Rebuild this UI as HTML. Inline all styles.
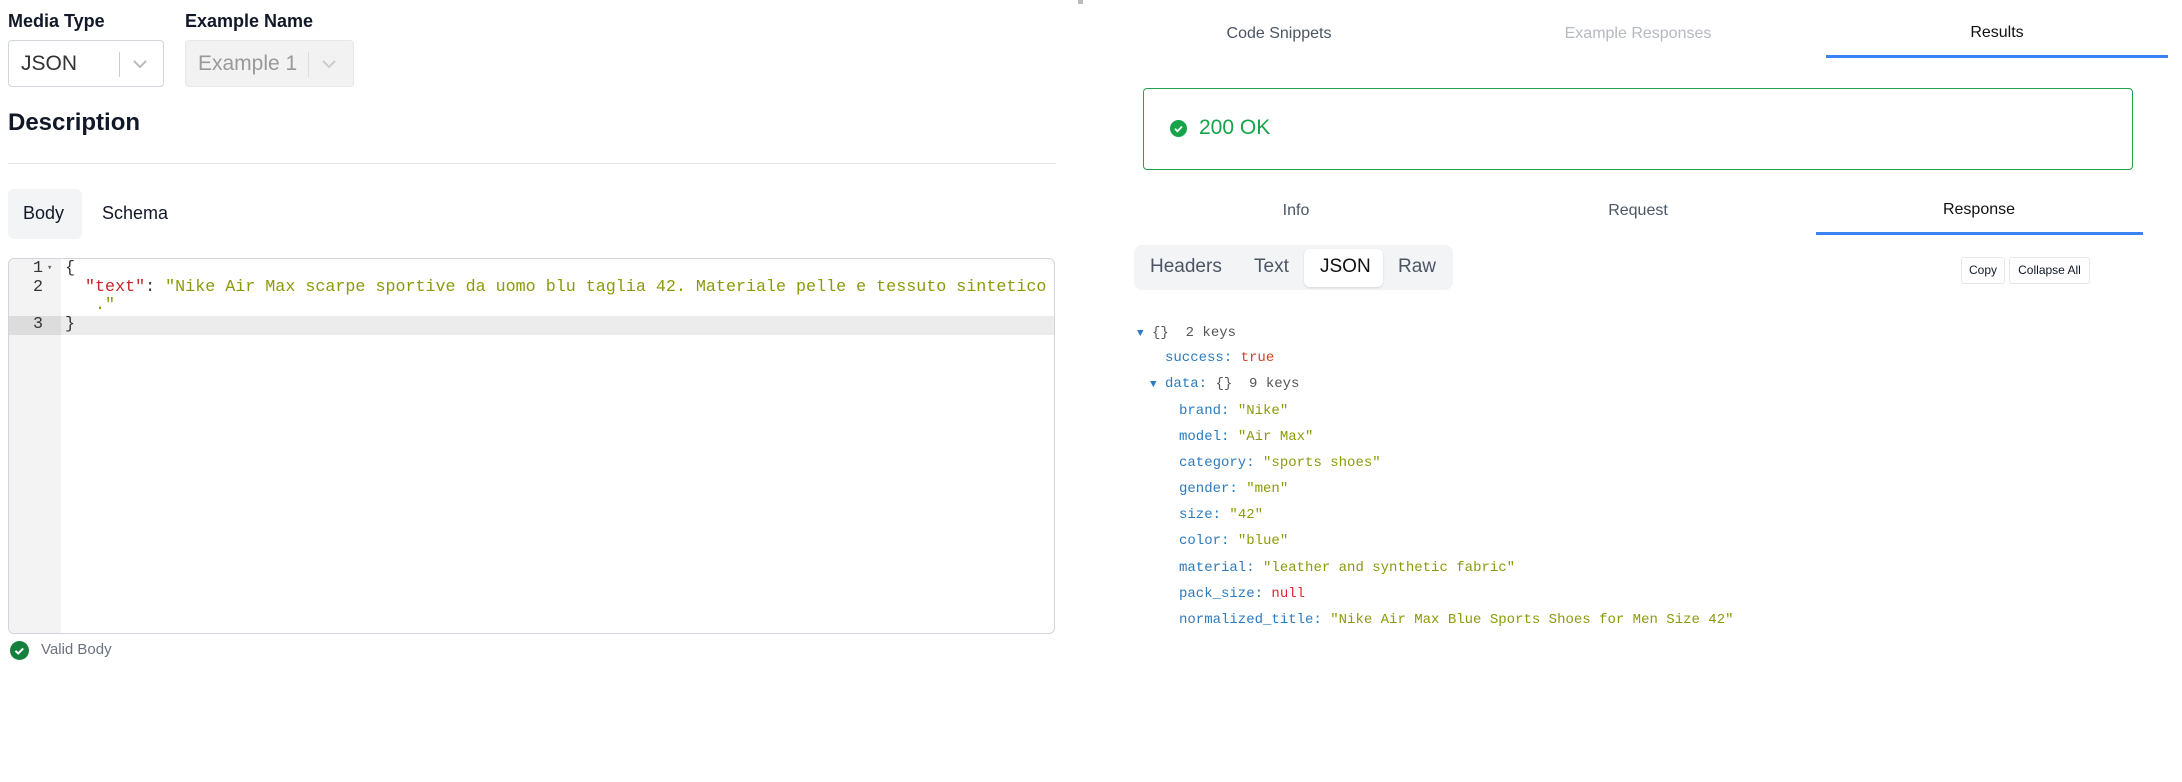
<!DOCTYPE html>
<html><head><meta charset="utf-8"><style>
*{margin:0;padding:0;box-sizing:border-box}
body{width:2182px;height:782px;background:#fff;position:relative;overflow:hidden;font-family:"Liberation Sans",sans-serif;color:#111827}
.a{position:absolute;white-space:pre}
.mono{font-family:"Liberation Mono","DejaVu Sans Mono",monospace}
.k{color:#2b7bbf}.s{color:#8c9a0a}.t{color:#d2451e}.n{color:#e02430}.g{color:#555}
.tab{position:absolute;font-size:16px;color:#4b5563;transform:translateX(-50%)}
</style></head><body>
<div class="a" style="left:8px;top:11px;font-size:18px;font-weight:600">Media Type</div>
<div class="a" style="left:185px;top:11px;font-size:18px;font-weight:600">Example Name</div>
<div class="a" style="left:8px;top:40px;width:156px;height:47px;border:1px solid #d1d5db;border-radius:4px"></div>
<div class="a" style="left:21px;top:52px;font-size:21px;color:#333">JSON</div>
<div class="a" style="left:119px;top:52px;width:1px;height:25px;background:#ccc"></div>
<svg class="a" style="left:132px;top:58px" width="16" height="12"><path d="M2 3l6 6 6-6" fill="none" stroke="#bbb" stroke-width="2"/></svg>
<div class="a" style="left:185px;top:40px;width:169px;height:47px;border:1px solid #e5e7eb;border-radius:4px;background:#f2f2f2"></div>
<div class="a" style="left:198px;top:52px;font-size:21px;color:#999">Example 1</div>
<div class="a" style="left:308px;top:52px;width:1px;height:25px;background:#ddd"></div>
<svg class="a" style="left:321px;top:58px" width="16" height="12"><path d="M2 3l6 6 6-6" fill="none" stroke="#ccc" stroke-width="2"/></svg>
<div class="a" style="left:8px;top:109px;font-size:24px;font-weight:700">Description</div>
<div class="a" style="left:8px;top:163px;width:1048px;height:1px;background:#e5e7eb"></div>
<div class="a" style="left:8px;top:189px;width:74px;height:50px;background:#f3f4f6;border-radius:6px"></div>
<div class="a" style="left:23px;top:203px;font-size:18px;font-weight:500">Body</div>
<div class="a" style="left:102px;top:203px;font-size:18px;font-weight:500">Schema</div>
<div class="a" style="left:8px;top:258px;width:1047px;height:376px;border:1px solid #d1d5db;border-radius:6px;overflow:hidden">
 <div class="a" style="left:0;top:0;width:52px;height:376px;background:#f3f3f3"></div>
 <div class="a" style="left:52px;top:57px;width:1000px;height:19px;background:#ececec"></div>
 <div class="a" style="left:0;top:57px;width:52px;height:19px;background:#dcdcdc"></div>
</div>
<div class="a mono" style="left:8px;top:259px;font-size:16.7px;line-height:18.7px;color:#333">
<div class="a" style="left:25px;top:1px">1</div><div class="a" style="left:39px;top:0;font-size:9px;color:#666">▾</div>
<div class="a" style="left:25px;top:20px">2</div>
<div class="a" style="left:25px;top:57px">3</div>
<div class="a" style="left:57px;top:1px">{</div>
<div class="a" style="left:57px;top:20px">  <span style="color:#c4262a">"text"</span>: <span class="s">"Nike Air Max scarpe sportive da uomo blu taglia 42. Materiale pelle e tessuto sintetico</span></div>
<div class="a s" style="left:57px;top:38px">   ."</div>
<div class="a" style="left:57px;top:57px">}</div>
</div>
<svg class="a" style="left:10px;top:641px" width="19" height="19"><circle cx="9.5" cy="9.5" r="9.5" fill="#15803d"/><path d="M5.5 9.8l2.7 2.7 5-5" fill="none" stroke="#fff" stroke-width="2"/></svg>
<div class="a" style="left:41px;top:641px;font-size:15px;color:#6b7280">Valid Body</div>
<div class="a" style="left:1078px;top:0;width:5px;height:4px;background:#bbb"></div>
<div class="tab" style="left:1279px;top:25px">Code Snippets</div>
<div class="tab" style="left:1638px;top:25px;color:#b5b9c0">Example Responses</div>
<div class="tab" style="left:1997px;top:24px;color:#111">Results</div>
<div class="a" style="left:1826px;top:55px;width:342px;height:3px;background:#3b82f6"></div>
<div class="a" style="left:1143px;top:88px;width:990px;height:82px;border:1.5px solid #22a04b;border-radius:4px"></div>
<svg class="a" style="left:1170px;top:120px" width="17" height="17"><circle cx="8.5" cy="8.5" r="8.5" fill="#16a34a"/><path d="M5 8.8l2.5 2.5 4.5-4.8" fill="none" stroke="#fff" stroke-width="1.8"/></svg>
<div class="a" style="left:1199px;top:116px;font-size:21px;color:#16a34a">200 OK</div>
<div class="tab" style="left:1296px;top:202px">Info</div>
<div class="tab" style="left:1638px;top:202px">Request</div>
<div class="tab" style="left:1979px;top:201px;color:#111">Response</div>
<div class="a" style="left:1816px;top:232px;width:327px;height:3px;background:#3b82f6"></div>
<div class="a" style="left:1134px;top:245px;width:319px;height:45px;background:#f3f4f6;border-radius:8px"></div>
<div class="a" style="left:1304px;top:249px;width:79px;height:38px;background:#fff;border-radius:6px;box-shadow:0 1px 2px rgba(0,0,0,.12)"></div>
<div class="a" style="left:1150px;top:256px;font-size:19px;color:#4b5563">Headers</div>
<div class="a" style="left:1254px;top:256px;font-size:19px;color:#4b5563">Text</div>
<div class="a" style="left:1320px;top:256px;font-size:19px;color:#111">JSON</div>
<div class="a" style="left:1398px;top:256px;font-size:19px;color:#4b5563">Raw</div>
<div class="a" style="left:1961px;top:257px;width:44px;height:27px;border:1px solid #e5e7eb;border-radius:3px;font-size:12px;line-height:25px;text-align:center">Copy</div>
<div class="a" style="left:2009px;top:257px;width:81px;height:27px;border:1px solid #e5e7eb;border-radius:3px;font-size:12px;line-height:25px;text-align:center">Collapse All</div>
<div class="mono" style="font-size:14px;color:#444">
<div class="a" style="left:1137px;top:325px"><span class="k" style="font-size:11px">▼</span> <span class="g">{}  2 keys</span></div>
<div class="a" style="left:1165px;top:350px"><span class="k">success:</span> <span class="t">true</span></div>
<div class="a" style="left:1150px;top:376px"><span class="k" style="font-size:11px">▼</span> <span class="k">data:</span> <span class="g">{}  9 keys</span></div>
<div class="a" style="left:1179px;top:403px"><span class="k">brand:</span> <span class="s">"Nike"</span></div>
<div class="a" style="left:1179px;top:429px"><span class="k">model:</span> <span class="s">"Air Max"</span></div>
<div class="a" style="left:1179px;top:455px"><span class="k">category:</span> <span class="s">"sports shoes"</span></div>
<div class="a" style="left:1179px;top:481px"><span class="k">gender:</span> <span class="s">"men"</span></div>
<div class="a" style="left:1179px;top:507px"><span class="k">size:</span> <span class="s">"42"</span></div>
<div class="a" style="left:1179px;top:533px"><span class="k">color:</span> <span class="s">"blue"</span></div>
<div class="a" style="left:1179px;top:560px"><span class="k">material:</span> <span class="s">"leather and synthetic fabric"</span></div>
<div class="a" style="left:1179px;top:586px"><span class="k">pack_size:</span> <span class="n">null</span></div>
<div class="a" style="left:1179px;top:612px"><span class="k">normalized_title:</span> <span class="s">"Nike Air Max Blue Sports Shoes for Men Size 42"</span></div>
</div>
</body></html>
